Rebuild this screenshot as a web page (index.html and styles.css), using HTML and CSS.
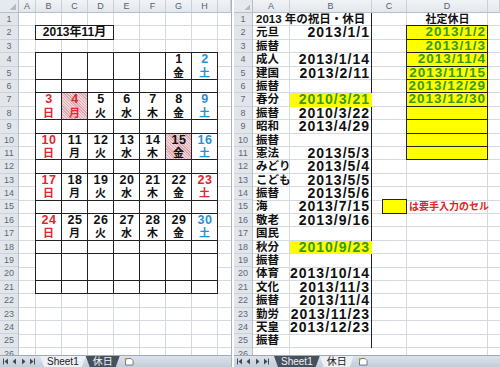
FILE: index.html
```html
<!DOCTYPE html>
<html lang="ja">
<head>
    <meta charset="UTF-8">
    <meta name="viewport" content="width=device-width, initial-scale=1.0">
    <title>2013年11月 カレンダー</title>
    <link rel="stylesheet" href="styles.css">
</head>
<body>
<div class="screen">

    <!-- Sheet1: month calendar -->
    <div class="pane pane-cal">
        <div class="sheet">
            <div class="corner"></div>
            <div class="col-heads cols-cal">
                <span>A</span><span>B</span><span>C</span><span>D</span><span>E</span><span>F</span><span>G</span><span>H</span><span></span>
            </div>
            <div class="row-heads">
                <span>1</span><span>2</span><span>3</span><span>4</span><span>5</span><span>6</span><span>7</span><span>8</span><span>9</span><span>10</span><span>11</span><span>12</span><span>13</span>
                <span>14</span><span>15</span><span>16</span><span>17</span><span>18</span><span>19</span><span>20</span><span>21</span><span>22</span><span>23</span><span>24</span><span>25</span><span>26</span>
            </div>
            <div class="cells cells-cal">
                <div class="cal-title">2013年11月</div>

                <div class="cal">
                    <!-- week 1 -->
                    <div class="day"><div class="date"></div></div>
                    <div class="day"><div class="date"></div></div>
                    <div class="day"><div class="date"></div></div>
                    <div class="day"><div class="date"></div></div>
                    <div class="day"><div class="date"></div></div>
                    <div class="day"><div class="date"><span class="n">1</span><span class="w">金</span></div></div>
                    <div class="day sat"><div class="date"><span class="n">2</span><span class="w">土</span></div></div>
                    <!-- week 2 -->
                    <div class="day sun"><div class="date"><span class="n">3</span><span class="w">日</span></div></div>
                    <div class="day hol mark"><div class="date"><span class="n">4</span><span class="w">月</span></div></div>
                    <div class="day"><div class="date"><span class="n">5</span><span class="w">火</span></div></div>
                    <div class="day"><div class="date"><span class="n">6</span><span class="w">水</span></div></div>
                    <div class="day"><div class="date"><span class="n">7</span><span class="w">木</span></div></div>
                    <div class="day"><div class="date"><span class="n">8</span><span class="w">金</span></div></div>
                    <div class="day sat"><div class="date"><span class="n">9</span><span class="w">土</span></div></div>
                    <!-- week 3 -->
                    <div class="day sun"><div class="date"><span class="n">10</span><span class="w">日</span></div></div>
                    <div class="day"><div class="date"><span class="n">11</span><span class="w">月</span></div></div>
                    <div class="day"><div class="date"><span class="n">12</span><span class="w">火</span></div></div>
                    <div class="day"><div class="date"><span class="n">13</span><span class="w">水</span></div></div>
                    <div class="day"><div class="date"><span class="n">14</span><span class="w">木</span></div></div>
                    <div class="day mark"><div class="date"><span class="n">15</span><span class="w">金</span></div></div>
                    <div class="day sat"><div class="date"><span class="n">16</span><span class="w">土</span></div></div>
                    <!-- week 4 -->
                    <div class="day sun"><div class="date"><span class="n">17</span><span class="w">日</span></div></div>
                    <div class="day"><div class="date"><span class="n">18</span><span class="w">月</span></div></div>
                    <div class="day"><div class="date"><span class="n">19</span><span class="w">火</span></div></div>
                    <div class="day"><div class="date"><span class="n">20</span><span class="w">水</span></div></div>
                    <div class="day"><div class="date"><span class="n">21</span><span class="w">木</span></div></div>
                    <div class="day"><div class="date"><span class="n">22</span><span class="w">金</span></div></div>
                    <div class="day hol"><div class="date"><span class="n">23</span><span class="w">土</span></div></div>
                    <!-- week 5 -->
                    <div class="day sun"><div class="date"><span class="n">24</span><span class="w">日</span></div></div>
                    <div class="day"><div class="date"><span class="n">25</span><span class="w">月</span></div></div>
                    <div class="day"><div class="date"><span class="n">26</span><span class="w">火</span></div></div>
                    <div class="day"><div class="date"><span class="n">27</span><span class="w">水</span></div></div>
                    <div class="day"><div class="date"><span class="n">28</span><span class="w">木</span></div></div>
                    <div class="day"><div class="date"><span class="n">29</span><span class="w">金</span></div></div>
                    <div class="day sat"><div class="date"><span class="n">30</span><span class="w">土</span></div></div>
                    <!-- week 6 -->
                    <div class="day"><div class="date"></div></div>
                    <div class="day"><div class="date"></div></div>
                    <div class="day"><div class="date"></div></div>
                    <div class="day"><div class="date"></div></div>
                    <div class="day"><div class="date"></div></div>
                    <div class="day"><div class="date"></div></div>
                    <div class="day"><div class="date"></div></div>
                </div>
            </div>
        </div>
        <div class="tabs">
            <div class="nav">
                <svg width="34" height="7" viewBox="0 0 34 7">
                    <rect x="0" y="0.5" width="1" height="6" fill="#3d4a58"/>
                    <path d="M5 0.5 L1.5 3.5 L5 6.5Z" fill="#3d4a58"/>
                    <path d="M13 0.5 L9.5 3.5 L13 6.5Z" fill="#3d4a58"/>
                    <path d="M19 0.5 L22.5 3.5 L19 6.5Z" fill="#3d4a58"/>
                    <path d="M27 0.5 L30.5 3.5 L27 6.5Z" fill="#3d4a58"/>
                    <rect x="31" y="0.5" width="1" height="6" fill="#3d4a58"/>
                </svg>
            </div>
            <div class="tab on">Sheet1</div>
            <div class="tab off">休日</div>
            <div class="add-sheet">
                <svg width="11" height="9" viewBox="0 0 11 9">
                    <path d="M1.5 1.5 H7 L9 3.5 V8 H1.5Z" fill="#fff" stroke="#55636f" stroke-width="0.8"/>
                    <path d="M2 1 L3 3 M0.5 2.5 L2.5 3" stroke="#e7a321" stroke-width="1"/>
                </svg>
            </div>
        </div>
    </div>

    <!-- 休日: holiday list -->
    <div class="pane pane-list">
        <div class="sheet">
            <div class="corner"></div>
            <div class="col-heads cols-list">
                <span>A</span><span>B</span><span>C</span><span>D</span><span></span>
            </div>
            <div class="row-heads">
                <span>1</span><span>2</span><span>3</span><span>4</span><span>5</span><span>6</span><span>7</span><span>8</span><span>9</span><span>10</span><span>11</span><span>12</span><span>13</span>
                <span>14</span><span>15</span><span>16</span><span>17</span><span>18</span><span>19</span><span>20</span><span>21</span><span>22</span><span>23</span><span>24</span><span>25</span><span>26</span>
            </div>
            <div class="cells cells-list">
                <div class="ttl">2013 年の祝日・休日</div>
                <div class="co head">社定休日</div>

                <div class="lbl">元旦</div><div class="dt">2013/1/1</div><div class="co in">2013/1/2</div>
                <div class="lbl">振替</div><div class="co in">2013/1/3</div>
                <div class="lbl">成人</div><div class="dt">2013/1/14</div><div class="co in">2013/11/4</div>
                <div class="lbl">建国</div><div class="dt">2013/2/11</div><div class="co in">2013/11/15</div>
                <div class="lbl">振替</div><div class="co in">2013/12/29</div>
                <div class="lbl">春分</div><div class="dt fill">2010/3/21</div><div class="co in">2013/12/30</div>
                <div class="lbl">振替</div><div class="dt">2010/3/22</div><div class="co in"></div>
                <div class="lbl">昭和</div><div class="dt">2013/4/29</div><div class="co in"></div>
                <div class="lbl">振替</div><div class="co in"></div>
                <div class="lbl">憲法</div><div class="dt">2013/5/3</div><div class="co in"></div>
                <div class="lbl">みどり</div><div class="dt">2013/5/4</div>
                <div class="lbl">こども</div><div class="dt">2013/5/5</div>
                <div class="lbl">振替</div><div class="dt">2013/5/6</div>
                <div class="lbl">海</div><div class="dt">2013/7/15</div><div class="swatch"></div><div class="co note">は要手入力のセル</div>
                <div class="lbl">敬老</div><div class="dt">2013/9/16</div>
                <div class="lbl">国民</div>
                <div class="lbl">秋分</div><div class="dt fill">2010/9/23</div>
                <div class="lbl">振替</div>
                <div class="lbl">体育</div><div class="dt">2013/10/14</div>
                <div class="lbl">文化</div><div class="dt">2013/11/3</div>
                <div class="lbl">振替</div><div class="dt">2013/11/4</div>
                <div class="lbl">勤労</div><div class="dt">2013/11/23</div>
                <div class="lbl">天皇</div><div class="dt">2013/12/23</div>
                <div class="lbl">振替</div>
            </div>
        </div>
        <div class="tabs">
            <div class="nav">
                <svg width="34" height="7" viewBox="0 0 34 7">
                    <rect x="0" y="0.5" width="1" height="6" fill="#3d4a58"/>
                    <path d="M5 0.5 L1.5 3.5 L5 6.5Z" fill="#3d4a58"/>
                    <path d="M13 0.5 L9.5 3.5 L13 6.5Z" fill="#3d4a58"/>
                    <path d="M19 0.5 L22.5 3.5 L19 6.5Z" fill="#3d4a58"/>
                    <path d="M27 0.5 L30.5 3.5 L27 6.5Z" fill="#3d4a58"/>
                    <rect x="31" y="0.5" width="1" height="6" fill="#3d4a58"/>
                </svg>
            </div>
            <div class="tab off">Sheet1</div>
            <div class="tab on">休日</div>
            <div class="add-sheet">
                <svg width="11" height="9" viewBox="0 0 11 9">
                    <path d="M1.5 1.5 H7 L9 3.5 V8 H1.5Z" fill="#fff" stroke="#55636f" stroke-width="0.8"/>
                    <path d="M2 1 L3 3 M0.5 2.5 L2.5 3" stroke="#e7a321" stroke-width="1"/>
                </svg>
            </div>
        </div>
    </div>

</div>
</body>
</html>
```

FILE: styles.css
```css
* {
    box-sizing: border-box;
}

body {
    margin: 0;
    width: 500px;
    height: 367px;
    overflow: hidden;
    background-color: #fff;
    font-family: "Liberation Sans", "Noto Sans CJK JP", sans-serif;
    color: #111;
}

.screen {
    display: flex;
    height: 367px;
}

.pane {
    display: flex;
    flex-direction: column;
    overflow: hidden;
}

.pane-cal {
    width: 232px;
    border-right: 1px solid #a9b3bd;
}

.pane-list {
    width: 266px;
    margin-left: 2px;
}

/* Sheet: corner, column headers, row headers, cell area */
.sheet {
    flex: 1;
    display: grid;
    grid-template-columns: 19px 1fr;
    grid-template-rows: 13px 1fr;
    overflow: hidden;
}

.corner {
    background: linear-gradient(135deg, transparent 50%, #b3bcc6 50%) no-repeat right 2px bottom 2px / 6px 6px, #e6eaef;
    border-right: 1px solid #b7c0ca;
    border-bottom: 1px solid #b7c0ca;
}

.col-heads {
    display: grid;
    background: linear-gradient(#f1f3f6, #e3e7ec);
    border-bottom: 1px solid #b7c0ca;
}

.col-heads span {
    font-size: 9px;
    line-height: 12px;
    color: #56616e;
    text-align: center;
    border-right: 1px solid #c9d0d8;
}

.cols-cal,
.cells-cal {
    grid-template-columns: 17px repeat(7, 26px) 1fr;
}

.cols-list,
.cells-list {
    grid-template-columns: 37px 82px 35px 81px 1fr;
}

.row-heads {
    display: grid;
    grid-auto-rows: 13.4px;
    background-color: #e2e6eb;
    border-right: 1px solid #b7c0ca;
}

.row-heads span {
    font-size: 9px;
    line-height: 13px;
    color: #5d6876;
    text-align: center;
    border-bottom: 1px solid #ccd2d9;
}

.cells {
    display: grid;
    grid-template-rows: repeat(26, 13.4px);
}

/* gridlines: rows every 13.4px, columns A then every 26px */
.cells-cal {
    background-image:
        repeating-linear-gradient(to bottom, transparent 0 12.4px, #d5dae1 12.4px 13.4px),
        linear-gradient(to right, transparent 25px, #d5dae1 25px);
    background-size: auto, 26px 100%;
    background-position: 0 0, -9px 0;
}

.cells-list {
    background-image:
        linear-gradient(#222, #222),
        repeating-linear-gradient(to bottom, transparent 0 12.4px, #d5dae1 12.4px 13.4px),
        linear-gradient(to right,
            transparent 36px, #d5dae1 36px 37px,
            transparent 37px 153px, #d5dae1 153px 154px,
            transparent 154px 234px, #d5dae1 234px 235px,
            transparent 235px);
    background-size: 1px 335px, auto, auto;
    background-position: 118px 0, 0 0, 0 0;
    background-repeat: no-repeat, repeat, repeat;
}

/* Calendar */
.cal-title {
    grid-column: 2 / 5;
    grid-row: 2;
    margin: -1px 0 0 -1px;
    border: 1px solid #222;
    background-color: #fff;
    font-size: 12px;
    font-weight: bold;
    line-height: 12.4px;
    text-align: center;
}

.cal {
    grid-column: 2 / 9;
    grid-row: 4 / 22;
    margin: -1px 0 0 -1px;
    border-top: 1px solid #222;
    border-left: 1px solid #222;
    background-color: #fff;
    display: grid;
    grid-template-columns: repeat(7, 26px);
    grid-template-rows: repeat(6, 40.2px);
}

.day {
    border-right: 1px solid #222;
    border-bottom: 1px solid #222;
}

.date {
    height: 26.8px;
    border-bottom: 1px solid #222;
    display: grid;
    grid-template-rows: 13.4px 1fr;
    text-align: center;
    font-weight: bold;
}

.n {
    font-size: 12.5px;
    line-height: 13.4px;
    letter-spacing: 0.6px;
    padding-left: 1px;
}

.w {
    font-size: 11px;
    line-height: 12.4px;
}

.sun,
.hol {
    color: #e0262c;
}

.sat {
    color: #2a90d4;
}

.mark .date {
    background: repeating-linear-gradient(45deg, #f3d6d9 0 1px, #dba9af 1px 2px);
}

/* Holiday list */
.cells-list > div {
    white-space: nowrap;
    font-weight: bold;
    line-height: 13.4px;
}

.ttl {
    grid-column: 1 / 3;
    font-size: 11.5px;
    padding-left: 3px;
}

.lbl {
    grid-column: 1;
    font-size: 11.5px;
    padding-left: 3px;
}

.dt {
    grid-column: 2;
    font-size: 14px;
    letter-spacing: 1px;
    text-align: right;
    padding-right: 2px;
}

.dt.fill {
    background-color: #ffff00;
    color: #359a18;
}

.co {
    grid-column: 4;
}

.co.head {
    font-size: 11px;
    text-align: center;
}

.cells-list > .in {
    margin: -1px 0 0 -1px;
    border: 1px solid #222;
    background-color: #ffff00;
    color: #359a18;
    font-size: 13.5px;
    line-height: 12.4px;
    letter-spacing: 1px;
    text-align: right;
    padding-right: 1px;
}

.swatch {
    grid-column: 3;
    margin: -1px 0 0 10px;
    border: 1px solid #222;
    background-color: #ffff00;
}

.cells-list > .note {
    color: #e42222;
    font-size: 10px;
    padding-left: 2px;
}

/* Sheet tabs */
.tabs {
    height: 12px;
    display: flex;
    align-items: stretch;
    background: linear-gradient(#dbe2ea, #c4cdd7);
    border-top: 1px solid #9eaab6;
    font-size: 10px;
}

.nav {
    width: 40px;
    display: flex;
    align-items: center;
    padding-left: 3px;
}

.tab {
    padding: 0 7px;
    line-height: 11px;
    clip-path: polygon(0 0, 100% 0, calc(100% - 4px) 100%, 4px 100%);
}

.tab.on {
    background-color: #eef1f4;
    color: #222;
}

.tab.off {
    background-color: #47515d;
    color: #eef1f4;
}

.add-sheet {
    display: flex;
    align-items: center;
    padding-left: 4px;
}
```
